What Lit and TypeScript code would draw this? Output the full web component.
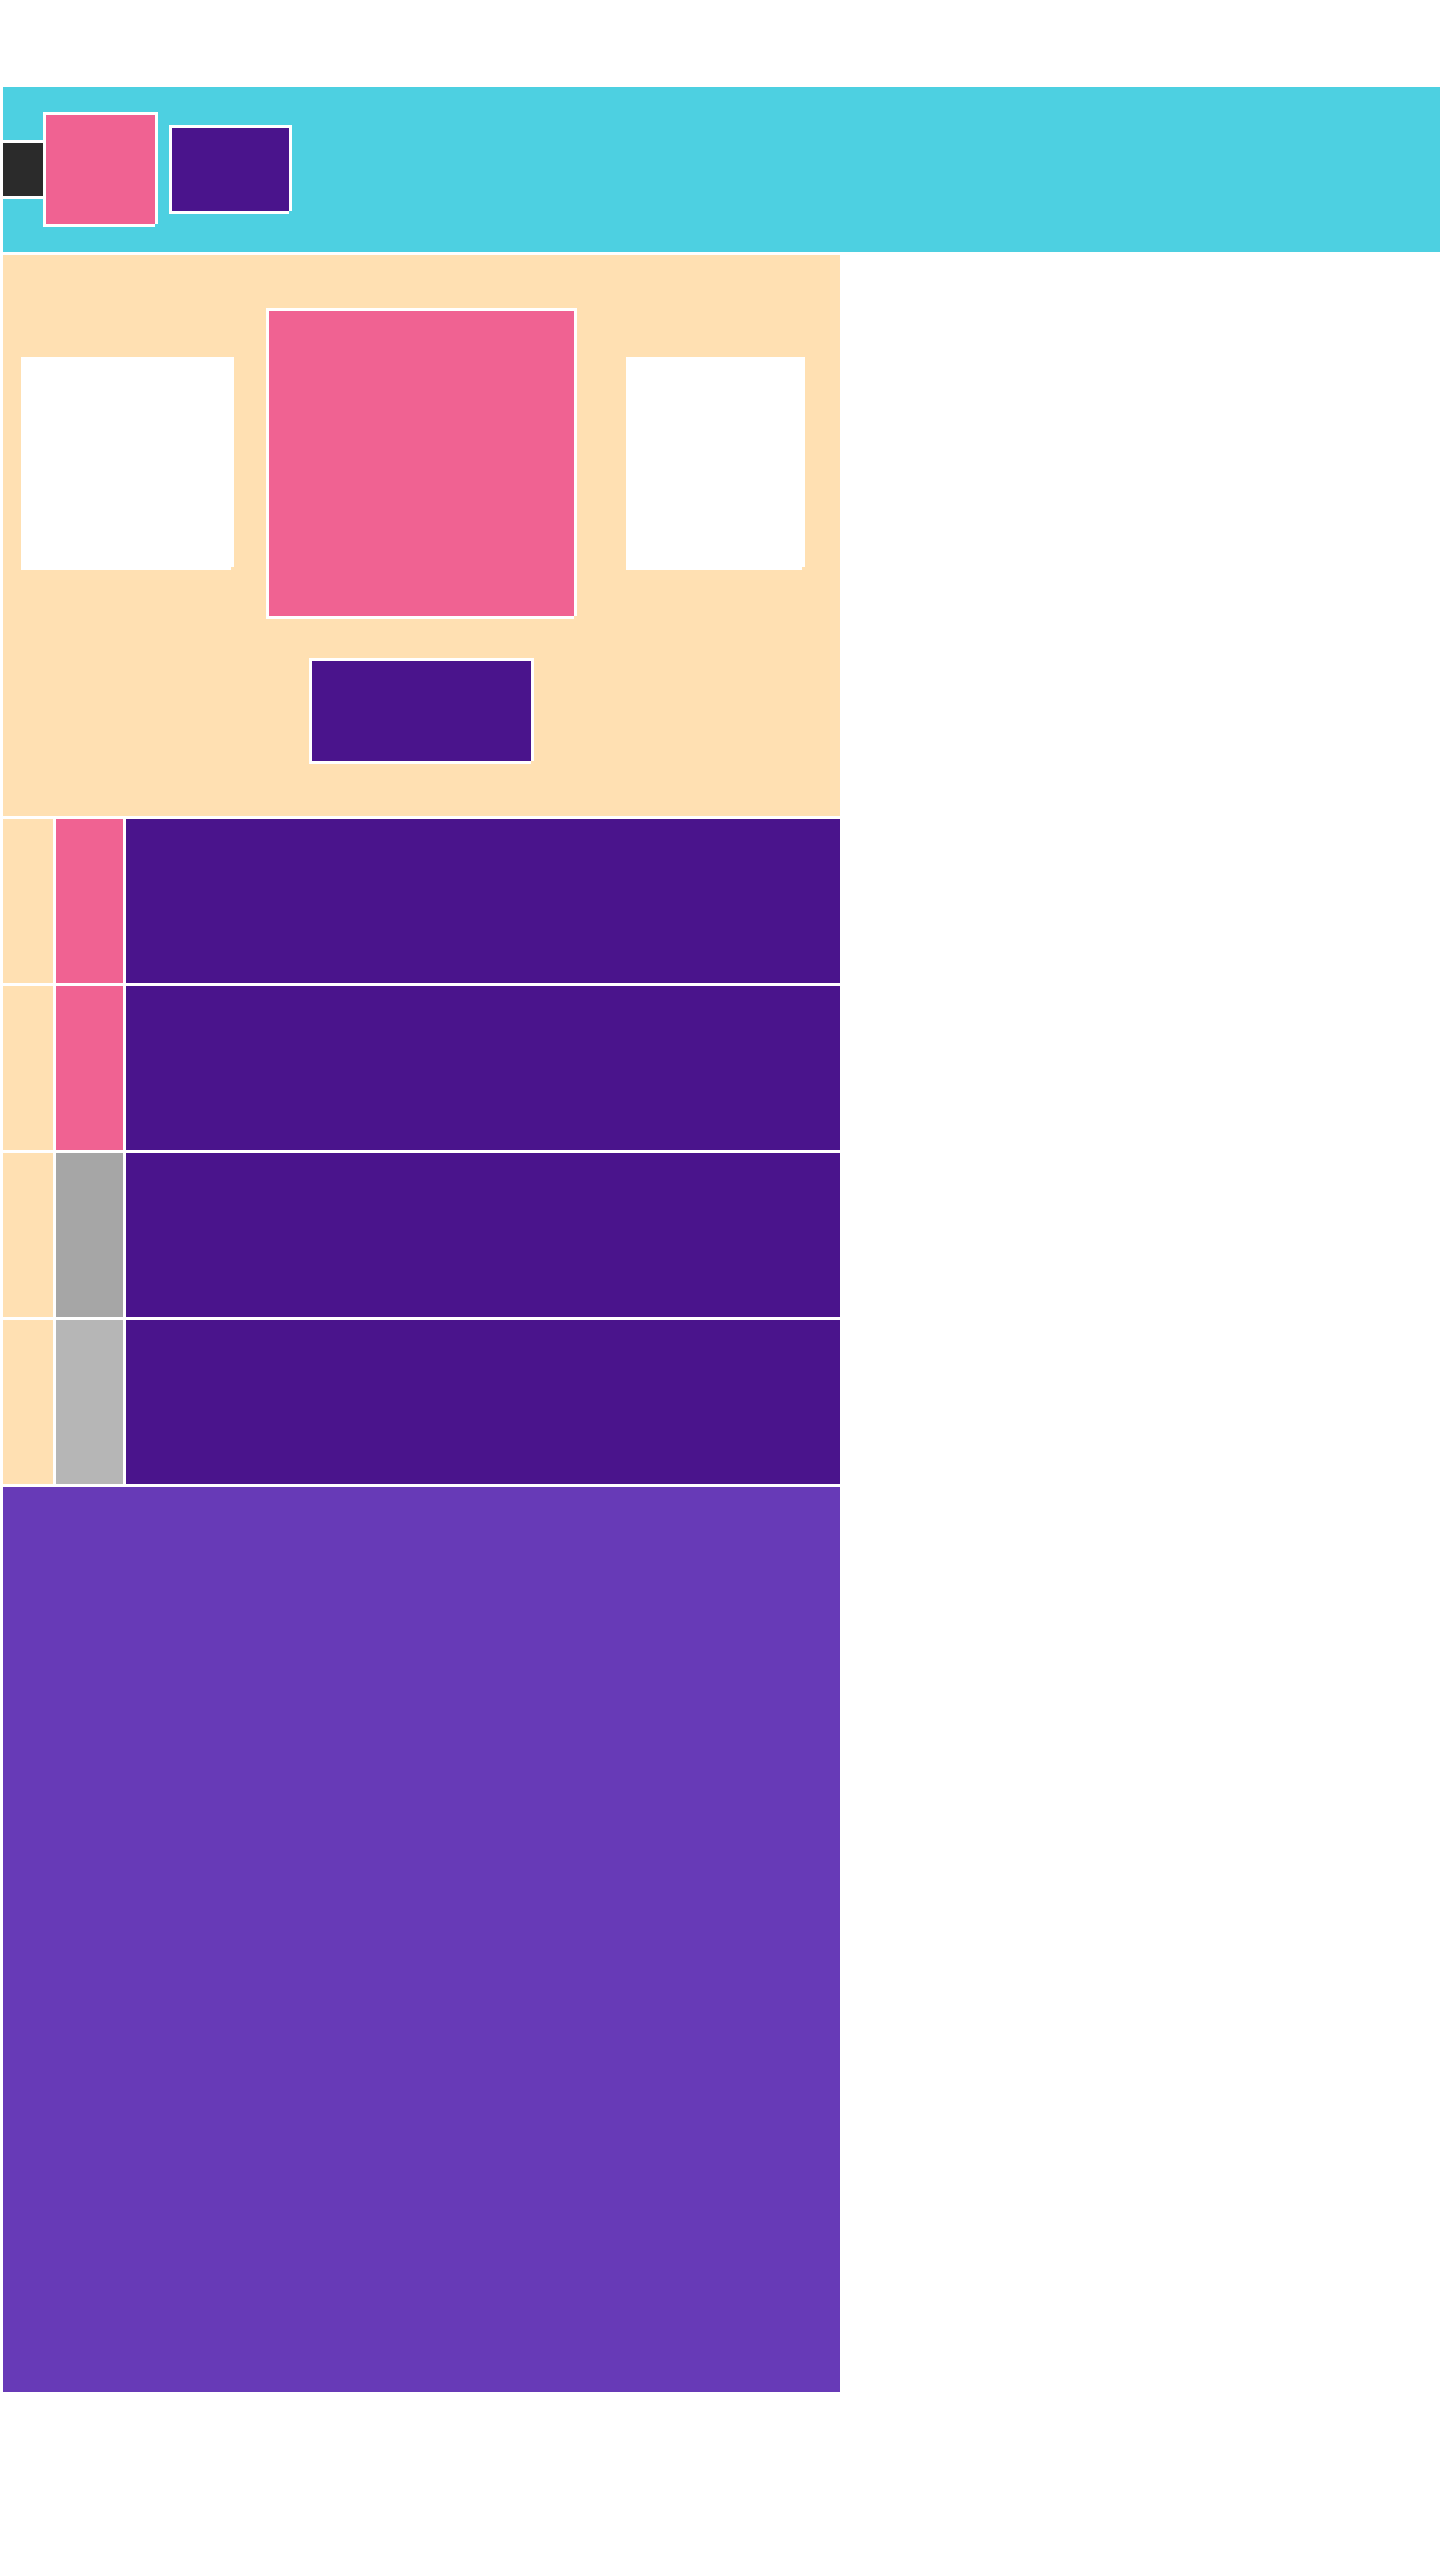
import { LitElement, html, css } from "lit";
import { customElement, property } from "lit/decorators.js";
import { classMap } from "lit/directives/class-map.js";

type Tone = "pink" | "slate" | "silver";

const tile = css`
  .tile {
    box-sizing: border-box;
    box-shadow:
      inset 3px 3px 0 #fff,
      3px 0 0 #fff,
      0 3px 0 #fff;
  }
  .cyan { background: #4dd0e1; }
  .cream { background: #ffe0b2; }
  .pink { background: #f06292; }
  .indigo { background: #4a148c; }
  .violet { background: #673ab7; }
  .ink { background: #2b2b2b; }
  .slate { background: #a6a6a6; }
  .silver { background: #b6b6b6; }
  .blank { background: #fff; }
`;

@customElement("top-bar")
class TopBar extends LitElement {
  static styles = [
    tile,
    css`
      :host { display: block; }
      .bar {
        display: flex;
        align-items: center;
        padding: 28px 0;
      }
      .back { width: 43px; height: 56px; }
      .avatar { width: 112px; height: 112px; }
      .name { width: 120px; height: 86px; margin-left: 14px; }
    `,
  ];

  render() {
    return html`
      <header class="bar tile cyan">
        <div class="back tile ink"></div>
        <div class="avatar tile pink"></div>
        <div class="name tile indigo"></div>
      </header>
    `;
  }
}

@customElement("profile-panel")
class ProfilePanel extends LitElement {
  static styles = [
    tile,
    css`
      :host { display: block; }
      .panel {
        display: grid;
        grid-template-columns: 1fr auto 1fr;
        gap: 42px 14px;
        place-items: center;
        padding: 56px 0 55px;
      }
      .left { width: 210px; height: 210px; }
      .photo { width: 308px; height: 308px; }
      .right { width: 176px; height: 210px; }
      .title { grid-column: 2; width: 222px; height: 103px; }
    `,
  ];

  render() {
    return html`
      <section class="panel tile cream">
        <div class="left tile blank"></div>
        <div class="photo tile pink"></div>
        <div class="right tile blank"></div>
        <div class="title tile indigo"></div>
      </section>
    `;
  }
}

@customElement("menu-row")
class MenuRow extends LitElement {
  @property() tone: Tone = "pink";

  static styles = [
    tile,
    css`
      :host { display: block; }
      .row {
        display: grid;
        grid-template-columns: 53px 70px 1fr;
        min-height: 167px;
      }
    `,
  ];

  render() {
    return html`
      <div class="row">
        <div class="tile cream"></div>
        <div class=${classMap({ tile: true, [this.tone]: true })}></div>
        <div class="tile indigo"></div>
      </div>
    `;
  }
}

@customElement("app-root")
class AppRoot extends LitElement {
  private rows: Tone[] = ["pink", "pink", "slate", "silver"];

  static styles = [
    tile,
    css`
      :host {
        display: block;
        padding: 84px 0 168px;
        background: #fff;
      }
      .drawer {
        max-width: 840px;
      }
      .rest { min-height: 908px; }
    `,
  ];

  render() {
    return html`
      <top-bar></top-bar>
      <main class="drawer">
        <profile-panel></profile-panel>
        ${this.rows.map((tone) => html`<menu-row tone=${tone}></menu-row>`)}
        <div class="rest tile violet"></div>
      </main>
    `;
  }
}
